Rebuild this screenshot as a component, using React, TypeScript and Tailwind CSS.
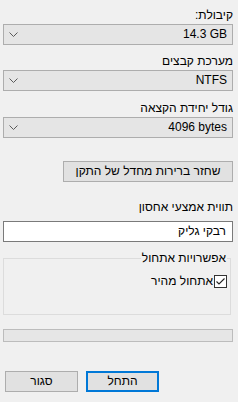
import React from "react";

function Chevron() {
  return (
    <svg width="9" height="5" viewBox="0 0 9 5" className="block">
      <path d="M0.5 0.5 L4.5 4.5 L8.5 0.5" fill="none" stroke="#5a5a5a" strokeWidth="1" />
    </svg>
  );
}

function Combo({ value }: { value: string }) {
  return (
    <div className="mt-[1px] h-[21px] w-[230px] border border-[#adadad] bg-[#e5e5e5] flex items-center justify-between pr-[5px] pl-[5px]">
      <span dir="ltr" className="leading-[19px]">{value}</span>
      <Chevron />
    </div>
  );
}

export default function App() {
  return (
    <div
      dir="rtl"
      className="w-[238px] h-[402px] bg-[#f0f0f0] text-black text-[12px] font-['Liberation_Sans','DejaVu_Sans',sans-serif] flex flex-col items-start pl-[3px] pr-[5px] overflow-hidden"
    >
      <div className="mt-[8px] h-[15px] leading-[15px]">קיבולת:</div>
      <Combo value="14.3 GB" />

      <div className="mt-[9px] h-[15px] leading-[15px]">מערכת קבצים</div>
      <Combo value="NTFS" />

      <div className="mt-[10px] h-[15px] leading-[15px]">גודל יחידת הקצאה</div>
      <Combo value="4096 bytes" />

      <button className="mt-[23px] h-[21px] w-[170px] border border-[#adadad] bg-[#e1e1e1] leading-[19px] text-center">
        שחזר ברירות מחדל של התקן
      </button>

      <div className="mt-[18px] h-[15px] leading-[15px]">תווית אמצעי אחסון</div>
      <div className="mt-[6px] h-[21px] w-[230px] border border-[#7a7a7a] bg-white flex items-center pr-[6px]">
        <span className="leading-[19px]">רבקי גליק</span>
      </div>

      <fieldset className="mt-[9px] mr-[2px] w-[228px] h-[64px] border border-[#dcdcdc] pr-[3px] pl-[2px]">
        <legend className="px-[1px] leading-[15px]">אפשרויות אתחול</legend>
        <div className="mt-[8px] flex items-center gap-[1px]">
          <div className="w-[13px] h-[13px] border border-[#333333] bg-white flex items-center justify-center">
            <svg width="11" height="11" viewBox="0 0 11 11" className="block">
              <path d="M1.5 5.5 L4 8 L9.5 2.5" fill="none" stroke="#222222" strokeWidth="1.1" />
            </svg>
          </div>
          <span className="leading-[15px]">אתחול מהיר</span>
        </div>
      </fieldset>

      <div className="mt-[14px] h-[13px] w-[230px] border border-[#bcbcbc] bg-[#e6e6e6]" />

      <div className="mt-[29px] w-[230px] flex gap-[8px] justify-end pl-[2px]">
        <button className="h-[21px] w-[73px] border-2 border-[#0078d7] bg-[#e1e1e1] leading-[17px] text-center">
          התחל
        </button>
        <button className="h-[21px] w-[73px] border border-[#adadad] bg-[#e1e1e1] leading-[19px] text-center">
          סגור
        </button>
      </div>
    </div>
  );
}
